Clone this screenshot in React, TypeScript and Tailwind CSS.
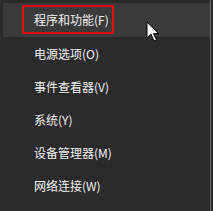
import React from 'react';

const items = [
  '程序和功能(F)',
  '电源选项(O)',
  '事件查看器(V)',
  '系统(Y)',
  '设备管理器(M)',
  '网络连接(W)',
];

function Cursor() {
  return (
    <svg
      className="absolute left-[146px] top-[21px]"
      width="14"
      height="22"
      viewBox="0 0 14 22"
    >
      <path
        d="M1 1 L1 17 L5 13 L8 20 L10.5 19 L7.5 12.5 L12.5 12.5 Z"
        fill="#ffffff"
        stroke="#000000"
        strokeWidth="1"
        strokeLinejoin="miter"
      />
    </svg>
  );
}

function App() {
  return (
    <div
      className="relative flex h-[211px] w-[213px] bg-[#2b2b2b] text-[12px] text-[#f2f2f2]"
      style={{ fontFamily: '"Noto Sans CJK SC", "Noto Sans", sans-serif' }}
    >
      <div className="flex flex-1 flex-col pl-[3px] pt-[3px]">
        {items.map((label, idx) => (
          <div
            key={label}
            className={
              idx === 0
                ? 'relative flex h-[34px] items-center bg-[#3b3b3b] pl-[31px]'
                : 'flex h-[33px] items-center pl-[31px]'
            }
          >
            {label}
            {idx === 0 && (
              <div className="absolute left-[19px] top-[2px] h-[29px] w-[92px] border-[2.5px] border-[#e00d0d]" />
            )}
          </div>
        ))}
      </div>
      <div className="w-[1px] bg-[#6a6a6a]" />
      <div className="w-[2px]" />
      <Cursor />
    </div>
  );
}

export default App;
